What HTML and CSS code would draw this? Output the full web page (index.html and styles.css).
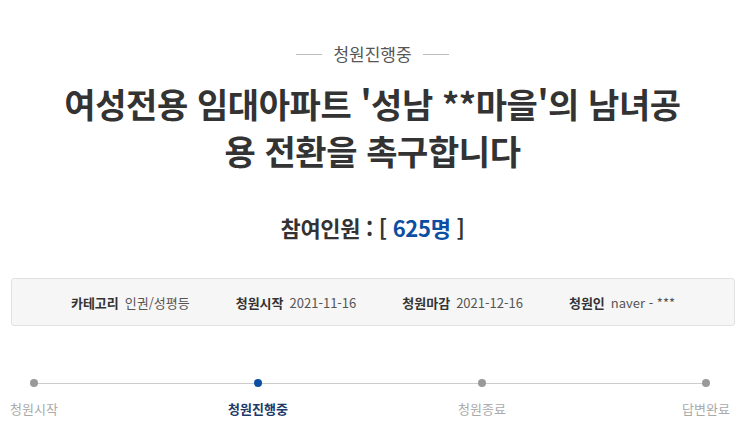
FILE: index.html
```html
<!DOCTYPE html>
<html lang="ko">
<head>
<meta charset="utf-8">
<link rel="stylesheet" href="styles.css">
</head>
<body>
<div class="page">
  <div class="status"><span class="dash"></span><span class="status-text">청원진행중</span><span class="dash"></span></div>
  <h1 class="title">여성전용 임대아파트 '성남 **마을'의 남녀공용 전환을 촉구합니다</h1>
  <div class="count">참여인원 : [ <span class="num">625명</span> ]</div>
  <div class="info">
    <div class="item"><span class="label">카테고리</span><span class="value">인권/성평등</span></div>
    <div class="item"><span class="label">청원시작</span><span class="value">2021-11-16</span></div>
    <div class="item"><span class="label">청원마감</span><span class="value">2021-12-16</span></div>
    <div class="item"><span class="label">청원인</span><span class="value">naver - ***</span></div>
  </div>
  <div class="progress">
    <div class="track"></div>
    <div class="step"><span class="dot"></span><span class="step-label">청원시작</span></div>
    <div class="step active"><span class="dot"></span><span class="step-label">청원진행중</span></div>
    <div class="step"><span class="dot"></span><span class="step-label">청원종료</span></div>
    <div class="step"><span class="dot"></span><span class="step-label">답변완료</span></div>
  </div>
</div>
</body>
</html>
```
FILE: styles.css
```css
html, body {
  margin: 0;
  padding: 0;
  background: #fff;
}
body {
  font-family: "Noto Sans CJK KR", "Noto Sans", sans-serif;
  color: #333;
}
.page {
  width: 745px;
  padding-top: 42px;
}
.status {
  display: flex;
  justify-content: center;
  align-items: center;
  gap: 11px;
  height: 24px;
}
.dash {
  width: 26px;
  height: 1px;
  background: #bbb;
}
.status-text {
  font-size: 17px;
  color: #555;
  line-height: 24px;
}
.title {
  margin: 14px auto 0;
  width: 640px;
  text-align: center;
  font-size: 34px;
  font-weight: 700;
  line-height: 47px;
  color: #333;
  letter-spacing: -0.4px;
}
.count {
  margin-top: 38px;
  text-align: center;
  font-size: 22px;
  font-weight: 700;
  line-height: 30px;
  color: #333;
  letter-spacing: -0.3px;
}
.num {
  color: #0b4ea2;
}
.info {
  margin: 36px 10px 0 11px;
  height: 48px;
  box-sizing: border-box;
  background: #f6f6f6;
  border: 1px solid #e2e2e2;
  border-radius: 3px;
  display: flex;
  justify-content: center;
  align-items: center;
  gap: 46px;
  font-size: 13px;
}
.item {
  display: flex;
  gap: 6px;
  align-items: center;
}
.label {
  font-weight: 700;
  color: #333;
}
.value {
  color: #555;
}
.progress {
  position: relative;
  margin: 53px 39px 0 34px;
  display: flex;
  justify-content: space-between;
  height: 50px;
}
.track {
  position: absolute;
  left: 0;
  right: 0;
  top: 4px;
  height: 1px;
  background: #ccc;
}
.step {
  position: relative;
  width: 0;
  display: flex;
  flex-direction: column;
  align-items: center;
}
.dot {
  width: 8px;
  height: 8px;
  border-radius: 50%;
  background: #999;
  flex: none;
}
.step-label {
  margin-top: 13px;
  white-space: nowrap;
  font-size: 13px;
  color: #aaa;
  line-height: 18px;
}
.step.active .dot {
  background: #0b4ea2;
}
.step.active .step-label {
  color: #1c3a6b;
  font-weight: 700;
}
```
